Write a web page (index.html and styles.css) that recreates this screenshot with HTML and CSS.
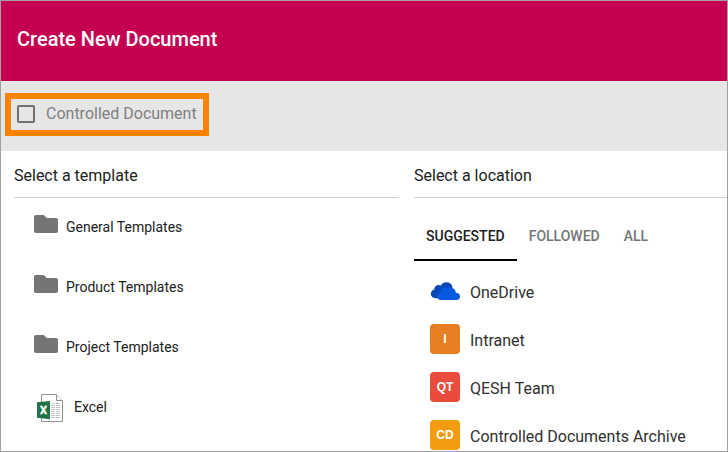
FILE: index.html
```html
<!DOCTYPE html>
<html lang="en">
<head>
<meta charset="utf-8">
<title>Create New Document</title>
<link rel="stylesheet" href="styles.css">
</head>
<body>
<svg class="defs" aria-hidden="true"><symbol id="folder" viewBox="0 0 24 18"><path d="M2 0H9.2Q10 0 10.5.6L12.6 3H22Q24 3 24 5V16Q24 18 22 18H2Q0 18 0 16V2Q0 0 2 0Z"/></symbol></svg>
<div class="dialog">
  <header class="header"><h1>Create New Document</h1></header>
  <div class="options">
    <label class="controlled"><span class="checkbox"></span><span>Controlled Document</span></label>
  </div>
  <main class="columns">
    <section class="templates">
      <h2>Select a template</h2>
      <ul>
        <li><svg class="folder"><use href="#folder"/></svg><span>General Templates</span></li>
        <li><svg class="folder"><use href="#folder"/></svg><span>Product Templates</span></li>
        <li><svg class="folder"><use href="#folder"/></svg><span>Project Templates</span></li>
        <li class="file">
          <svg class="excel" viewBox="0 0 26 28">
            <path d="M4.5.5H19.5L25.5 6.5V27.5H4.5Z" fill="#fff" stroke="#929292"/>
            <path d="M19.5.5V6.5H25.5" fill="#fff" stroke="#929292"/>
            <path d="M14 9.5H23M14 11.5H23M14 13.5H23M14 15.5H23M14 17.5H23M14 19.5H23M14 21.5H23M14 23.5H23" stroke="#c4c4c4" stroke-dasharray="4 1"/>
            <path d="M0 8.3L13 7V25.3L0 23.7Z" fill="#217346"/>
            <text x="6.5" y="20" text-anchor="middle">X</text>
          </svg>
          <span>Excel</span>
        </li>
      </ul>
    </section>
    <section class="locations">
      <h2>Select a location</h2>
      <nav class="tabs"><a class="active">SUGGESTED</a><a>FOLLOWED</a><a>ALL</a></nav>
      <ul>
        <li>
          <svg class="cloud" viewBox="0 0 30 18">
            <path d="M6 16.3C2.8 16.3.8 14.5.8 11.8C.8 9.6 2.3 8 4.3 7.6C4.2 4.8 6.5 3 8.8 3C9.7 3 10.4 3.2 11 3.5C12 1.5 14 .3 16.3.3C19.5.3 21.8 2.3 22.5 5L20 13L12 16.3Z" fill="#0747b5"/>
            <path d="M11.5 18C8.8 18 7 16.4 7 14.2C7 12.2 8.3 10.9 10 10.6C9.9 7.4 12.1 5.2 14.9 5.2C16.5 5.2 17.6 5.8 18.5 6.8C21.4 4.7 25.8 6.6 25.8 10.7C28.3 10.8 30 12.2 30 14.4C30 16.6 28.4 18 26.2 18Z" fill="#0559de"/>
          </svg>
          <span>OneDrive</span>
        </li>
        <li><b class="badge intranet">I</b><span>Intranet</span></li>
        <li><b class="badge qesh">QT</b><span>QESH Team</span></li>
        <li><b class="badge archive">CD</b><span>Controlled Documents Archive</span></li>
      </ul>
    </section>
  </main>
</div>
</body>
</html>
```
FILE: styles.css
```css
* { box-sizing: border-box; }
body { margin: 0; font-family: Roboto, "Liberation Sans", sans-serif; color: #212121; background: #fff; }
.defs { display: none; }
svg { display: block; flex: none; }
ul { list-style: none; margin: 0; padding: 0; }
.dialog { width: 728px; height: 452px; border: 1px solid #a0a0a0; overflow: hidden; }
.header { height: 80px; padding-left: 16px; display: flex; align-items: center; background: #c50051; }
.header h1 { margin: 0; padding-bottom: 4px; font-size: 20px; font-weight: 500; line-height: 24px; color: #fff; }
.options { height: 70px; padding: 12px 4px; background: #e6e6e6; }
.controlled { width: 204px; height: 43px; border: 6px solid #ff8300; padding-left: 6px; display: flex; align-items: center; gap: 11px; font-size: 16px; line-height: 20px; color: #808080; white-space: nowrap; }
.controlled span:last-child { padding-bottom: 2px; }
.checkbox { width: 18px; height: 18px; margin-bottom: 1px; border: 2px solid #707070; border-radius: 2px; }
.columns { display: grid; grid-template-columns: 385px 1fr; column-gap: 15px; padding-left: 13px; }
h2 { height: 47px; margin: 0; padding-top: 15px; border-bottom: 1px solid #d1d1d1; font-size: 16px; font-weight: 400; line-height: 20px; }
.templates li { height: 60px; padding: 0 0 4px 20px; display: flex; align-items: center; gap: 8px; font-size: 14px; }
.templates li span { padding-top: 2px; }
.folder { width: 24px; height: 18px; margin-bottom: 4px; fill: #757575; }
.templates .file { padding-left: 23px; gap: 11px; }
.excel { width: 26px; height: 28px; margin-top: 3px; }
.excel text { font: 700 11px Roboto, sans-serif; fill: #fff; stroke: #fff; stroke-width: .4px; }
.tabs { display: flex; height: 63px; padding-top: 15px; font-size: 14px; font-weight: 500; line-height: 46px; color: #757575; }
.tabs a { height: 48px; padding: 0 12px; }
.tabs .active { color: #212121; border-bottom: 2px solid #000; }
.locations ul { padding-top: 6px; }
.locations li { height: 48px; padding-left: 16px; display: flex; align-items: center; gap: 10px; font-size: 16px; color: #303030; white-space: nowrap; }
.locations li span { padding-top: 2px; }
.cloud { width: 30px; height: 18px; }
.badge { width: 30px; height: 30px; border-radius: 4px; display: grid; place-items: center; color: #fff; font: 700 12px "Liberation Sans", sans-serif; }
.intranet { background: #e67e22; }
.qesh { background: #e94b3c; }
.archive { background: #f39c12; }
```
